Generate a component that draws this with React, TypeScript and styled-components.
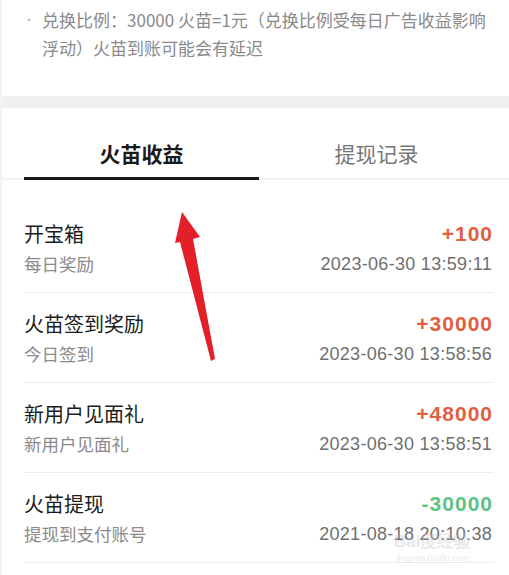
import React from "react";
import styled, { createGlobalStyle } from "styled-components";

const GlobalStyle = createGlobalStyle`
  html, body {
    margin: 0;
    padding: 0;
    background: #f0f0f0;
  }
  body {
    font-family: "Noto Sans CJK SC", "Liberation Sans", sans-serif;
  }
`;

type Record = {
  title: string
  sub: string
  amount: string
  date: string
  kind: "plus" | "minus"
};

const records: Record[] = [
  { title: "开宝箱", sub: "每日奖励", amount: "+100", date: "2023-06-30 13:59:11", kind: "plus" },
  { title: "火苗签到奖励", sub: "今日签到", amount: "+30000", date: "2023-06-30 13:58:56", kind: "plus" },
  { title: "新用户见面礼", sub: "新用户见面礼", amount: "+48000", date: "2023-06-30 13:58:51", kind: "plus" },
  { title: "火苗提现", sub: "提现到支付账号", amount: "-30000", date: "2021-08-18 20:10:38", kind: "minus" },
];

export default function App() {
  return (
    <Page>
      <GlobalStyle />
      <NoteCard>
        <Bullet>•</Bullet>
        <NoteText>兑换比例：30000 火苗=1元（兑换比例受每日广告收益影响浮动）火苗到账可能会有延迟</NoteText>
      </NoteCard>
      <ListCard>
        <Tabs>
          <Tab active>火苗收益</Tab>
          <Tab>提现记录</Tab>
        </Tabs>
        <List>
          {records.map((r, i) => (
            <Row key={r.title + r.date} first={i === 0}>
              <Col>
                <Title>{r.title}</Title>
                <Sub>{r.sub}</Sub>
              </Col>
              <Col right>
                <Amount kind={r.kind}>{r.amount}</Amount>
                <DateText>{r.date}</DateText>
              </Col>
            </Row>
          ))}
        </List>
        <Watermark>
          <WmBig>Bai度经验</WmBig>
          <WmSmall>jingyan.baidu.com</WmSmall>
        </Watermark>
        <Arrow width="509" height="300" viewBox="0 0 509 300">
          <path d="M180 104 L198 129 L191 131 L213 251 L209 253 L178 134 L173 135 Z" fill="#e3202a" />
        </Arrow>
      </ListCard>
    </Page>
  );
}

const Page = styled.div`
  width: 509px;
  min-height: 575px;
  background: #f0f0f0;
  border-left: 2px solid #f3f3f3;
  box-sizing: border-box;
  display: flex;
  flex-direction: column;
  gap: 12px;
`;

const NoteCard = styled.div`
  background: #fff;
  height: 96px;
  box-sizing: border-box;
  padding: 6px 16px 0 21px;
  display: flex;
  gap: 7px;
`;

const Bullet = styled.span`
  color: #bbb;
  font-size: 12px;
  line-height: 28px;
`;

const NoteText = styled.p`
  margin: 0;
  color: #8a8a8a;
  font-size: 17px;
  line-height: 28px;
`;

const ListCard = styled.div`
  background: #fff;
  flex: 1;
  position: relative;
`;

const Tabs = styled.div`
  display: flex;
  padding: 0 15px 0 22px;
  border-bottom: 2px solid #f2f2f2;
`;

const Tab = styled.div<{ active?: boolean }>`
  width: 235px;
  height: 72px;
  box-sizing: border-box;
  padding-top: 31px;
  text-align: center;
  font-size: 21px;
  line-height: 28px;
  font-weight: ${(p) => (p.active ? 600 : 400)};
  color: ${(p) => (p.active ? "#1a1a1a" : "#777")};
  border-bottom: 3px solid ${(p) => (p.active ? "#1a1a1a" : "transparent")};
  margin-bottom: -2px;
`;

const List = styled.div`
  padding: 0 15px 0 22px;
`;

const Row = styled.div<{ first?: boolean }>`
  display: flex;
  justify-content: space-between;
  height: ${(p) => (p.first ? "113px" : "90px")};
  box-sizing: border-box;
  padding-top: ${(p) => (p.first ? "41px" : "18px")};
  border-bottom: 1px solid #ececec;
`;

const Col = styled.div<{ right?: boolean }>`
  display: flex;
  flex-direction: column;
  align-items: ${(p) => (p.right ? "flex-end" : "flex-start")};
  gap: 4px;
  padding-right: ${(p) => (p.right ? "2px" : "0")};
`;

const Title = styled.span`
  font-size: 20px;
  line-height: 26px;
  color: #1c1c1c;
`;

const Sub = styled.span`
  font-size: 17.5px;
  line-height: 26px;
  color: #8a8a8a;
`;

const Amount = styled.span<{ kind: "plus" | "minus" }>`
  font-family: "Liberation Sans", "Noto Sans", sans-serif;
  font-size: 21px;
  line-height: 26px;
  font-weight: bold;
  letter-spacing: 1px;
  margin-right: -1px;
  color: ${(p) => (p.kind === "plus" ? "#e0603f" : "#5ec47f")};
`;

const DateText = styled.span`
  font-family: "Liberation Sans", "Noto Sans", sans-serif;
  font-size: 18px;
  line-height: 26px;
  letter-spacing: 0.3px;
  color: #6f6f6f;
`;

const Watermark = styled.div`
  position: absolute;
  left: 392px;
  top: 424px;
  display: flex;
  flex-direction: column;
  align-items: center;
  color: rgba(195, 195, 195, 0.4);
  pointer-events: none;
`;

const WmBig = styled.span`
  font-family: "Liberation Sans", sans-serif;
  font-size: 17px;
  font-weight: bold;
  line-height: 20px;
`;

const WmSmall = styled.span`
  font-family: "Liberation Sans", sans-serif;
  font-size: 9px;
  line-height: 12px;
`;

const Arrow = styled.svg`
  position: absolute;
  left: 0;
  top: 0;
  pointer-events: none;
`;
